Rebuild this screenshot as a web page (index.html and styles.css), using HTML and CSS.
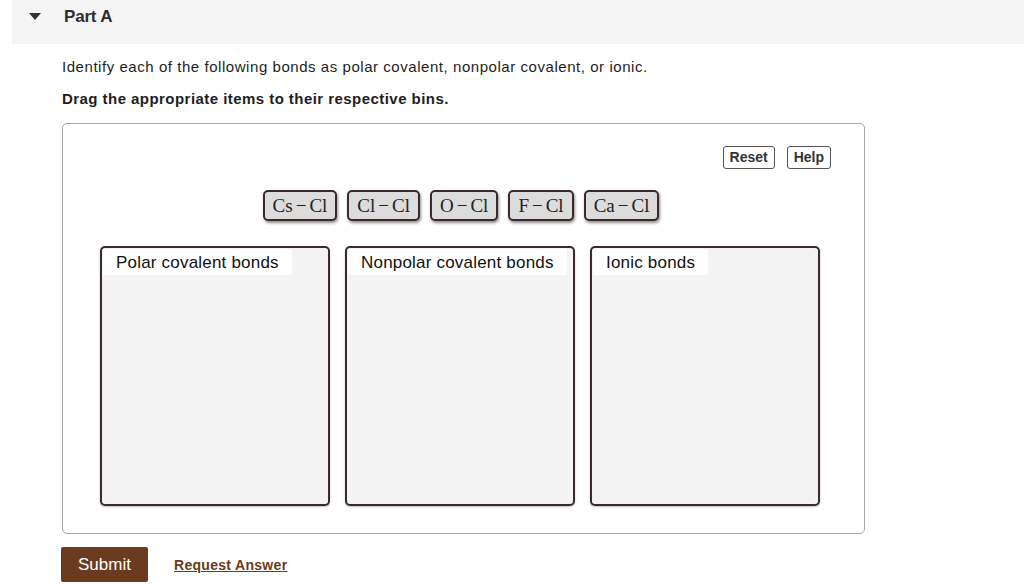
FILE: index.html
```html
<!DOCTYPE html>
<html lang="en">
<head>
    <meta charset="UTF-8">
    <meta name="viewport" content="width=device-width, initial-scale=1.0">
    <title>Part A</title>
    <link rel="stylesheet" href="styles.css">
</head>
<body>
    <section class="parte">
        <div class="parte-titulo">
            <span class="seta"></span>
            <h2>Part A</h2>
        </div>

        <div class="enunciado">
            <p>Identify each of the following bonds as polar covalent, nonpolar covalent, or ionic.</p>
            <p class="instrucao">Drag the appropriate items to their respective bins.</p>
        </div>

        <div class="quadro">
            <div class="ferramentas">
                <button class="mini">Reset</button>
                <button class="mini">Help</button>
            </div>

            <div class="pecas">
                <div class="peca">Cs<span class="traco">&minus;</span>Cl</div>
                <div class="peca">Cl<span class="traco">&minus;</span>Cl</div>
                <div class="peca">O<span class="traco">&minus;</span>Cl</div>
                <div class="peca">F<span class="traco">&minus;</span>Cl</div>
                <div class="peca">Ca<span class="traco">&minus;</span>Cl</div>
            </div>

            <div class="caixas">
                <div class="caixa"><span class="rotulo">Polar covalent bonds</span></div>
                <div class="caixa"><span class="rotulo">Nonpolar covalent bonds</span></div>
                <div class="caixa"><span class="rotulo">Ionic bonds</span></div>
            </div>
        </div>

        <div class="acoes">
            <button class="enviar">Submit</button>
            <a href="#" class="pedir">Request Answer</a>
        </div>
    </section>
</body>
</html>
```

FILE: styles.css
```css
body {
    margin: 0px;
    padding: 0px;
    background: #fff;
    font-family: "Liberation Sans", Arial, sans-serif;
    color: #222;
}

.parte-titulo {
    margin-left: 12px;
    height: 44px;
    background-color: #f5f5f5;
    display: flex;
    align-items: center;
}

.seta {
    width: 0;
    height: 0;
    margin-left: 17px;
    margin-top: -12px;
    border-left: 6px solid transparent;
    border-right: 6px solid transparent;
    border-top: 7px solid #333;
}

.parte-titulo h2 {
    margin: -11px 0 0 23px;
    font-size: 17px;
    font-weight: bold;
    color: #2e2e2e;
    letter-spacing: -0.2px;
}

.enunciado {
    padding: 13px 0 0 62px;
}

.enunciado p {
    margin: 0;
    font-size: 15px;
    line-height: 19px;
    letter-spacing: 0.55px;
    color: #1e1e1e;
}

.enunciado .instrucao {
    margin-top: 13px;
    font-weight: bold;
    letter-spacing: 0.45px;
}

.quadro {
    margin: 15px 0 0 62px;
    width: 803px;
    height: 411px;
    border: 1px solid #a8a8a8;
    border-radius: 5px;
    box-sizing: border-box;
}

.ferramentas {
    display: flex;
    justify-content: flex-end;
    gap: 12px;
    padding: 22px 33px 0 0;
}

.mini {
    font-family: "Liberation Sans", Arial, sans-serif;
    font-size: 14px;
    font-weight: bold;
    color: #333;
    background: #fff;
    border: 1px solid #555;
    border-radius: 3px;
    padding: 3px 6px;
    line-height: 15px;
}

.pecas {
    display: flex;
    justify-content: center;
    gap: 10px;
    margin-top: 21px;
    padding-right: 5px;
}

.peca {
    font-family: "Liberation Serif", "Times New Roman", serif;
    font-size: 19px;
    color: #222;
    background-color: #dcdcdc;
    border: 2px solid #3a2b2b;
    border-radius: 5px;
    padding: 0 8px;
    height: 31px;
    line-height: 27px;
    box-sizing: border-box;
    box-shadow: 1px 2px 3px rgba(0, 0, 0, 0.45);
}

.traco {
    margin: 0 3px;
}

.caixas {
    display: flex;
    gap: 15px;
    margin-top: 25px;
    padding-left: 37px;
}

.caixa {
    width: 230px;
    height: 260px;
    background-color: #f3f3f3;
    border: 2px solid #3a2b2b;
    border-radius: 5px;
    box-sizing: border-box;
    padding: 1px;
    box-shadow: 0 1px 2px rgba(0, 0, 0, 0.25);
}

.rotulo {
    display: inline-block;
    background-color: #fff;
    font-size: 17px;
    letter-spacing: 0.2px;
    color: #111;
    padding: 4px 13px 3px 13px;
    line-height: 19px;
}

.acoes {
    display: flex;
    align-items: center;
    gap: 26px;
    margin: 13px 0 0 61px;
}

.enviar {
    font-family: "Liberation Sans", Arial, sans-serif;
    font-size: 17px;
    color: #fff;
    background-color: #6b3b1f;
    border: none;
    border-radius: 2px;
    width: 87px;
    height: 35px;
}

.pedir {
    font-size: 14px;
    font-weight: bold;
    letter-spacing: 0.3px;
    color: #6b3b1a;
    text-decoration: underline;
}
```
